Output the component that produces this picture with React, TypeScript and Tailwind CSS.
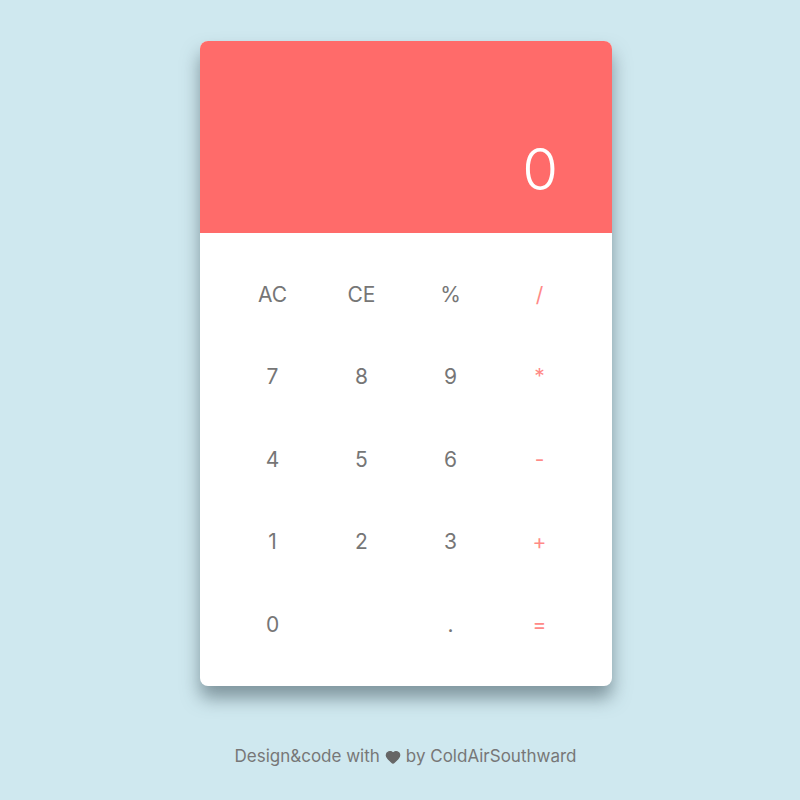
import { Heart } from 'lucide-react';

const keys = [
  { label: 'AC', op: false },
  { label: 'CE', op: false },
  { label: '%', op: false },
  { label: '/', op: true },
  { label: '7', op: false },
  { label: '8', op: false },
  { label: '9', op: false },
  { label: '*', op: true },
  { label: '4', op: false },
  { label: '5', op: false },
  { label: '6', op: false },
  { label: '-', op: true },
  { label: '1', op: false },
  { label: '2', op: false },
  { label: '3', op: false },
  { label: '+', op: true },
  { label: '0', op: false },
  { label: '', op: false },
  { label: '.', op: false },
  { label: '=', op: true },
];

const App = () => {
  return (
    <div className="min-h-screen w-full bg-[#cfe8ef] flex flex-col items-center pt-[41px] font-['Inter',sans-serif]">
      {/* Calculator card */}
      <div className="ml-[12px] w-[412px] h-[645px] rounded-lg bg-white overflow-hidden shadow-[0_12px_18px_rgba(60,80,90,0.55)] flex flex-col">
        <div className="h-[192px] bg-[#ff6b6a] flex items-end justify-end pr-[54px] pb-[35px]">
          <span className="text-[58px] leading-none font-light text-white">0</span>
        </div>
        <div className="flex-1 px-[28px] py-[20px] grid grid-cols-4 grid-rows-5">
          {keys.map((k, i) => (
            <button
              key={i}
              className={`flex items-center justify-center text-[21px] ${
                k.op ? 'text-[#ff8a87]' : 'text-[#767676]'
              }`}
            >
              {k.label}
            </button>
          ))}
        </div>
      </div>

      {/* Footer */}
      <p className="ml-[11px] mt-[58px] text-[17px] text-[#777] flex items-center gap-[5px]">
        Design&amp;code with
        <Heart size={16} className="fill-[#666] text-[#666]" />
        by ColdAirSouthward
      </p>
    </div>
  );
};

export default App;
